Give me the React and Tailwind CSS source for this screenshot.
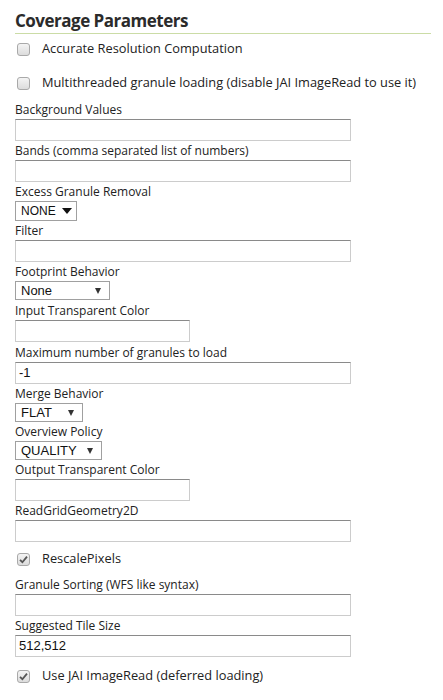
const font = { fontFamily: '"Open Sans", "Liberation Sans", sans-serif' };
const arial = { fontFamily: '"Liberation Sans", Arial, sans-serif' };

const Checkbox = ({ label, checked }) => (
  <div className="flex items-center h-[22px]">
    <span className="ml-[2px] w-[13px] h-[13px] rounded-[3px] border border-[#a9a9a9] bg-gradient-to-b from-[#f4f4f4] to-[#dcdcdc] flex items-center justify-center">
      {checked && (
        <svg width="9" height="9" viewBox="0 0 9 9">
          <path d="M1 4.8 L3.4 7.2 L8 1.6" fill="none" stroke="#555" strokeWidth="1.8" />
        </svg>
      )}
    </span>
    <span className="ml-[12px] text-[12.8px] text-[#222] whitespace-nowrap">{label}</span>
  </div>
);

const Label = ({ children }) => (
  <div className="text-[12px] leading-[19px] text-[#222] whitespace-nowrap">{children}</div>
);

const TextInput = ({ value = '', short }) => (
  <div
    className={`${short ? 'w-[175px]' : 'w-[336px]'} h-[22px] border border-[#cccccc] border-t-[#8a8a8a] bg-white px-[3px] text-[13px] leading-[20px] text-[#111]`}
    style={arial}
  >
    {value}
  </div>
);

const Select = ({ value, width, big }) => (
  <div
    className={`${big ? 'h-[20px] pr-[4px] text-[12px]' : 'h-[19px] pr-[8px] text-[13px]'} border border-[#a0a0a0] bg-white flex items-center justify-between pl-[5px] text-[#111]`}
    style={{ width, ...arial }}
  >
    <span>{value}</span>
    {big ? (
      <svg width="10" height="6" viewBox="0 0 10 6"><path d="M0 0 H10 L5 6 Z" fill="#111" /></svg>
    ) : (
      <svg width="6" height="6" viewBox="0 0 6 6"><path d="M0 0 H6 L3 6 Z" fill="#333" /></svg>
    )}
  </div>
);

export default function App() {
  return (
    <div className="bg-white w-[443px] h-[700px] px-[15px] pt-[10px]" style={font}>
      <h3 className="text-[17px] tracking-[-0.5px] font-bold text-[#2b2b2b] leading-[22px] pb-[1px] border-b border-[#cbdca6] w-[416px]">
        Coverage Parameters
      </h3>
      <div className="mt-[4px] flex flex-col gap-[12px]">
        <Checkbox label="Accurate Resolution Computation" />
        <Checkbox label="Multithreaded granule loading (disable JAI ImageRead to use it)" />
      </div>
      <div className="mt-[6px]">
        <Label>Background Values</Label>
        <TextInput />
        <Label>Bands (comma separated list of numbers)</Label>
        <TextInput />
        <div className="leading-[18px]"><Label>Excess Granule Removal</Label></div>
        <Select value="NONE" width="62px" big />
        <Label>Filter</Label>
        <TextInput />
        <Label>Footprint Behavior</Label>
        <Select value="None" width="95px" />
        <div className="pt-[1px]"><Label>Input Transparent Color</Label></div>
        <TextInput short />
        <div className="pt-[1px]"><Label>Maximum number of granules to load</Label></div>
        <TextInput value="-1" />
        <Label>Merge Behavior</Label>
        <Select value="FLAT" width="68px" />
        <Label>Overview Policy</Label>
        <Select value="QUALITY" width="87px" />
        <Label>Output Transparent Color</Label>
        <TextInput short />
        <Label>ReadGridGeometry2D</Label>
        <TextInput />
        <div className="mt-[6px]">
          <Checkbox label="RescalePixels" checked />
        </div>
        <div className="mt-[5px]">
          <Label>Granule Sorting (WFS like syntax)</Label>
        </div>
        <TextInput />
        <Label>Suggested Tile Size</Label>
        <TextInput value="512,512" />
        <div className="mt-[8px]">
          <Checkbox label="Use JAI ImageRead (deferred loading)" checked />
        </div>
      </div>
    </div>
  );
}
